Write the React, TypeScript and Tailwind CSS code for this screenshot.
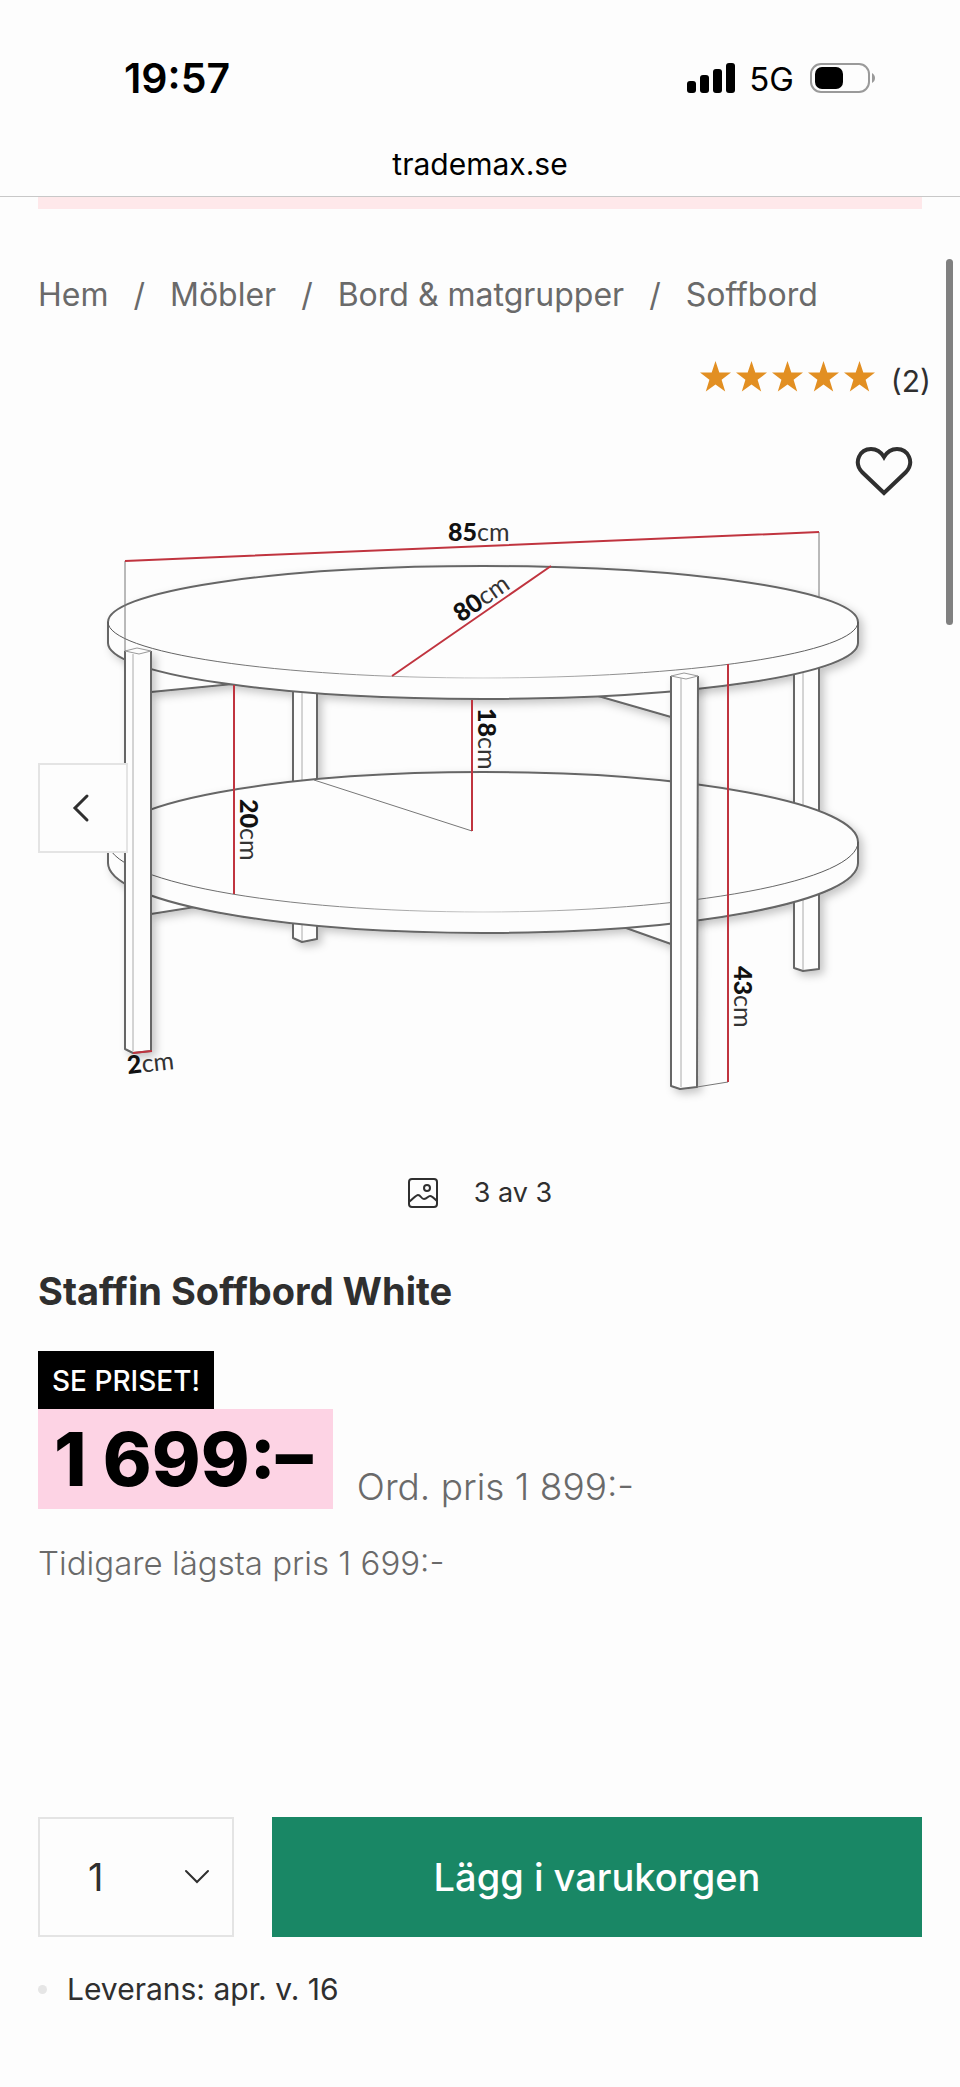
import { useState } from 'react';

const CRUMBS = ['Hem', 'Möbler', 'Bord & matgrupper', 'Soffbord'];

const StatusBar = () => (
    <div className="flex h-32 items-center justify-between pt-7 pr-[84px] pl-[124px]">
        <span className="text-[41px] leading-[44px] font-semibold">19:57</span>
        <div className="flex items-center">
            <svg width="48" height="30" viewBox="0 0 48 30" aria-hidden="true">
                <rect x="0" y="18" width="9" height="12" rx="3" />
                <rect x="13" y="12" width="9" height="18" rx="3" />
                <rect x="26" y="6" width="9" height="24" rx="3" />
                <rect x="39" y="0" width="9" height="30" rx="3" />
            </svg>
            <span className="ml-[14px] pt-[2px] text-[33px] leading-10">5G</span>
            <svg className="ml-4" width="66" height="32" viewBox="0 0 66 32" aria-hidden="true">
                <rect x="1" y="2" width="58" height="28" rx="10" fill="none" stroke="#9a9a9a" strokeWidth="2" />
                <rect x="5" y="5" width="28" height="22" rx="7" />
                <path d="M62 11c4 2 4 8 0 10z" fill="#9a9a9a" />
            </svg>
        </div>
    </div>
);

const Rating = () => (
    <div className="flex items-start justify-end gap-4 pr-[29px]">
        <svg width="175" height="32" viewBox="0 0 175 32" fill="#e28f22" role="img" aria-label="5 av 5">
            {[0, 36, 72, 108, 144].map(x => (
                <path key={x} transform={`translate(${x} 0)`} d="M15.5 0l3.8 11.6H31l-9.4 7.2 3.6 11.7-9.7-7.1-9.7 7.1 3.6-11.7L0 11.6h11.7z" />
            ))}
        </svg>
        <a href="#reviews" className="text-[30px] leading-10">(2)</a>
    </div>
);

const Measure = ({ at, value }: { at: string, value: string }) => (
    <text transform={at} fontSize="25" fill="#333" stroke="none" fontFamily="Lato, sans-serif">
        <tspan fontWeight="900" fill="#111">{value}</tspan><tspan>cm</tspan>
    </text>
);

const TableDrawing = () => (
    <svg viewBox="0 500 960 614" className="block w-full" role="img" aria-label="Staffin Soffbord mått">
        <defs>
            <filter id="shade" x="-5%" y="-5%" width="115%" height="115%">
                <feDropShadow dx="4" dy="4" stdDeviation="4" floodColor="#000" floodOpacity="0.22" />
            </filter>
            {/* the front rim fades out towards the middle */}
            <linearGradient id="rim" gradientUnits="userSpaceOnUse" x1="108" y1="0" x2="858" y2="0">
                <stop offset="0" stopColor="#555" />
                <stop offset="0.3" stopColor="#888" />
                <stop offset="0.5" stopColor="#ccc" />
                <stop offset="0.7" stopColor="#888" />
                <stop offset="1" stopColor="#555" />
            </linearGradient>
        </defs>

        <g fill="#fdfdfd" stroke="#666" strokeWidth="2" strokeLinejoin="round" filter="url(#shade)">
            {/* back legs */}
            <path d="M293 670V937L302 941L317 938V670z" />
            <path d="M794 650V967L803 970L819 968V650z" />
            <path d="M302 690V940M803 668V969" stroke="#aaa" strokeWidth="1" />
            {/* lower shelf */}
            <path d="M151 913L195 906L151 890zM626 927L671 943V915z" />
            <path d="M108 841A375 70 0 0 1 858 841V862A375 70 0 0 1 108 862z" />
            {/* table top */}
            <path d="M151 691L233 683L151 660zM598 695L671 716V680z" />
            <path d="M108 621A375 56 0 0 1 858 621V642A375 56 0 0 1 108 642z" />
        </g>
        <g fill="none" stroke="url(#rim)" strokeWidth="1">
            <path d="M108 841A375 70 0 0 0 858 841" />
            <path d="M108 621A375 56 0 0 0 858 621" />
        </g>
        <path d="M314 779L472 830" stroke="#777" />

        {/* front legs */}
        <g fill="#fdfdfd" stroke="#666" strokeWidth="2" strokeLinejoin="round" filter="url(#shade)">
            <path d="M125 650V1048L133 1052L151 1050V650" />
            <path d="M671 675V1085L680 1088L697 1086L698 675" />
        </g>
        <g fill="#fdfdfd" stroke="#999" strokeWidth="1">
            <path d="M125 650L137 647L151 650L139 653zM671 675L684 672L698 675L686 678z" />
            <path d="M133 653V1050M681 677V1086" stroke="#aaa" />
            <path d="M697 1086L728 1081" stroke="#777" />
            <path d="M125 560V650M819 531V596" stroke="#777" />
        </g>

        <g fill="none" stroke="#c0343f" strokeWidth="2">
            <path d="M125 560L819 531M392 675L551 565M234 684V893M472 699V830M728 663V1081M133 1052L152 1050" />
        </g>
        <Measure at="translate(448 540)" value="85" />
        <Measure at="translate(461 622) rotate(-35)" value="80" />
        <Measure at="translate(478 707) rotate(90)" value="18" />
        <Measure at="translate(240 798) rotate(90)" value="20" />
        <Measure at="translate(734 965) rotate(90)" value="43" />
        <Measure at="translate(128 1073) rotate(-6)" value="2" />
    </svg>
);

const Gallery = () => (
    <section>
        <div className="relative">
            <TableDrawing />
            <button aria-label="Föregående bild" className="absolute top-1/2 left-[38px] flex h-[90px] w-[90px] -translate-y-1/2 items-center justify-center border-2 border-[#e4e4e4] bg-[#fdfdfd] pr-1">
                <svg width="18" height="30" viewBox="0 0 18 30" fill="none" stroke="#2f2f2f" strokeWidth="3" strokeLinecap="round">
                    <path d="M15 3L3 15L15 27" />
                </svg>
            </button>
        </div>
        <div className="mt-[58px] flex h-10 items-center justify-center gap-9">
            <svg width="30" height="30" viewBox="0 0 30 30" fill="none" stroke="#2f2f2f" strokeWidth="2">
                <rect x="1" y="1" width="28" height="28" rx="3" />
                <circle cx="19" cy="10" r="3" />
                <path d="M1 24C5 21 8 17 10 17C13 17 13 21 16 21C19 21 20 18 22 18C24 18 26 20 29 23" />
            </svg>
            <span className="text-[27px] leading-10">3 av 3</span>
        </div>
    </section>
);

const BuyBox = () => {
    const [quantity, setQuantity] = useState('1');

    return (
        <form onSubmit={e => e.preventDefault()} className="flex h-[120px] gap-[38px]">
            <div className="relative w-[196px]">
                <select aria-label="Antal" value={quantity} onChange={e => setQuantity(e.target.value)} className="h-full w-full appearance-none border-2 border-[#e4e4e4] bg-[#fdfdfd] pl-12 text-[38px]">
                    {['1', '2', '3', '4', '5'].map(n => <option key={n}>{n}</option>)}
                </select>
                <svg className="pointer-events-none absolute top-1/2 right-6 -translate-y-1/2" width="26" height="16" viewBox="0 0 26 16" fill="none" stroke="#2f2f2f" strokeWidth="2" strokeLinecap="round">
                    <path d="M2 2L13 13L24 2" />
                </svg>
            </div>
            <button type="submit" className="flex-1 bg-[#198765] text-[38px] font-medium text-white">Lägg i varukorgen</button>
        </form>
    );
};

export default function App() {
    return (
        <div className="relative border-b-2 border-[#d0d0d0] bg-[#fdfdfd] font-[Inter,sans-serif] text-[#2f2f2f]">
            <header className="border-b border-[#c8c8c8] text-black">
                <StatusBar />
                <p className="h-[68px] pt-4 text-center text-[30px] leading-[40px]">trademax.se</p>
            </header>
            <div className="mx-[38px] h-3 bg-[#fee8ea]" />
            <div className="absolute top-[259px] right-[7px] h-[366px] w-[7px] rounded-full bg-[#808080]" />

            <main>
                <nav aria-label="Brödsmulor" className="mt-16 px-[38px]">
                    <ol className="flex text-[32px] leading-[44px] text-[#6a6a6a]">
                        {CRUMBS.map((crumb, i) => (
                            <li key={crumb} className="flex">
                                {i > 0 && <span className="mx-[25px]">/</span>}
                                <a href="#">{crumb}</a>
                            </li>
                        ))}
                    </ol>
                </nav>

                <div className="mt-11"><Rating /></div>
                <div className="mt-[46px] flex h-[54px] justify-end pr-[47px]">
                    <button aria-label="Spara som favorit" className="h-[50px] w-[58px]">
                        <svg width="58" height="50" viewBox="0 0 58 50" fill="none" stroke="#2f2f2f" strokeWidth="4">
                            <path d="M29 46L7 25C-2 15 5 2 16 2C22 2 26 5 29 10C32 5 36 2 42 2C53 2 60 15 51 25z" />
                        </svg>
                    </button>
                </div>

                <Gallery />

                <section className="px-[38px]">
                    <h1 className="mt-[54px] text-[38px] leading-[48px] font-bold">Staffin Soffbord White</h1>
                    <div className="mt-9 flex">
                        <span className="bg-black px-[14px] pt-[2px] text-[28px] leading-[56px] font-medium text-white">SE PRISET!</span>
                    </div>
                    <div className="flex items-end gap-6">
                        <strong className="bg-[#fdd3e4] pr-5 pl-4 text-[74px] leading-[100px] font-extrabold text-black">1 699:–</strong>
                        <span className="text-[37px] leading-[44px] font-light text-[#6a6a6a]">Ord. pris 1 899:-</span>
                    </div>
                    <p className="mt-8 text-[33px] leading-[44px] font-light text-[#6a6a6a]">Tidigare lägsta pris 1 699:-</p>

                    <div className="mt-[232px]"><BuyBox /></div>
                    <p className="mt-[30px] mb-[78px] flex items-center gap-5 text-[30px] leading-[44px]">
                        <span className="h-[9px] w-[9px] rounded-full bg-[#e6e6e6]" />
                        Leverans: apr. v. 16
                    </p>
                </section>
            </main>
        </div>
    );
}
